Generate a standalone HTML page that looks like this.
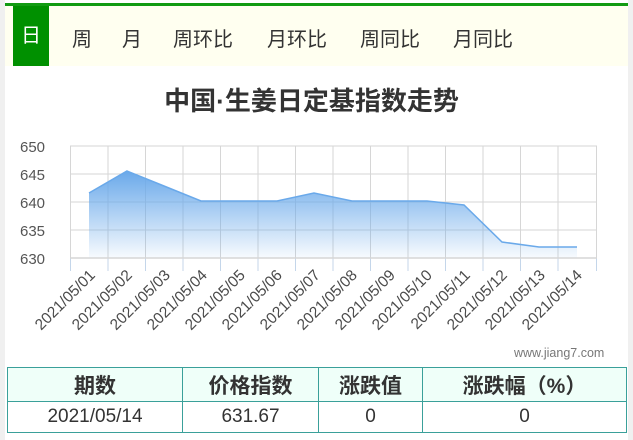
<!DOCTYPE html>
<html><head><meta charset="utf-8"><style>
*{margin:0;padding:0;box-sizing:border-box}
body{width:633px;height:440px;background:#fff;font-family:"Liberation Sans","Noto Sans CJK SC",sans-serif;position:relative;overflow:hidden}
.side{position:absolute;top:0;bottom:0;width:5px;background:#f0f0f0}
.top{position:absolute;left:5px;right:5px;top:3px;height:3px;background:#129b12}
.tabs{position:absolute;left:5px;right:5px;top:6px;height:60px;background:#fffff0}
.tab{position:absolute;top:17px;font-size:20px;color:#333}
.act{position:absolute;left:8px;top:0;width:36px;height:60px;background:#009000;color:#fff;font-size:20px;text-align:center;line-height:60px}
h1{position:absolute;left:0;width:623px;top:81px;text-align:center;font-size:26px;font-weight:bold;color:#333}
.wm{position:absolute;left:514px;top:346px;font-size:12.5px;color:#777}
table{position:absolute;left:7px;top:367px;width:620px;border-collapse:collapse;font-size:19px;color:#333}
td{border:1.5px solid #3aa09a;text-align:center}
tr.h td{background:#effff9;font-weight:bold;height:34px;font-size:21px}
tr.d td{height:31px}
</style></head><body>
<div class="side" style="left:0"></div><div class="side" style="right:0"></div>
<div class="top"></div>
<div class="tabs">
<div class="act">日</div>
<div class="tab" style="left:67px">周</div>
<div class="tab" style="left:117px">月</div>
<div class="tab" style="left:168px">周环比</div>
<div class="tab" style="left:262px">月环比</div>
<div class="tab" style="left:355px">周同比</div>
<div class="tab" style="left:448px">月同比</div>
</div>
<h1>中国·生姜日定基指数走势</h1>
<svg width="633" height="360" style="position:absolute;left:0;top:0">
<defs><linearGradient id="g" x1="0" y1="0" x2="0" y2="1"><stop offset="0" stop-color="#6aa9ea"/><stop offset="1" stop-color="#6aa9ea" stop-opacity="0.05"/></linearGradient></defs>
<g stroke="#d6d6d6" stroke-width="1">
<line x1="70" y1="146" x2="597" y2="146"/><line x1="70" y1="174" x2="597" y2="174"/><line x1="70" y1="202" x2="597" y2="202"/><line x1="70" y1="230" x2="597" y2="230"/>
<line x1="70.5" y1="146" x2="70.5" y2="258"/><line x1="108" y1="146" x2="108" y2="258"/><line x1="145.5" y1="146" x2="145.5" y2="258"/><line x1="183" y1="146" x2="183" y2="258"/><line x1="220.5" y1="146" x2="220.5" y2="258"/><line x1="258" y1="146" x2="258" y2="258"/><line x1="295.5" y1="146" x2="295.5" y2="258"/><line x1="333" y1="146" x2="333" y2="258"/><line x1="370.5" y1="146" x2="370.5" y2="258"/><line x1="408" y1="146" x2="408" y2="258"/><line x1="445.5" y1="146" x2="445.5" y2="258"/><line x1="483" y1="146" x2="483" y2="258"/><line x1="520.5" y1="146" x2="520.5" y2="258"/><line x1="558" y1="146" x2="558" y2="258"/><line x1="596.5" y1="146" x2="596.5" y2="258"/>
</g>
<g stroke="#c4d6ea" stroke-width="1">
<line x1="70.5" y1="258" x2="70.5" y2="271"/><line x1="108" y1="258" x2="108" y2="271"/><line x1="145.5" y1="258" x2="145.5" y2="271"/><line x1="183" y1="258" x2="183" y2="271"/><line x1="220.5" y1="258" x2="220.5" y2="271"/><line x1="258" y1="258" x2="258" y2="271"/><line x1="295.5" y1="258" x2="295.5" y2="271"/><line x1="333" y1="258" x2="333" y2="271"/><line x1="370.5" y1="258" x2="370.5" y2="271"/><line x1="408" y1="258" x2="408" y2="271"/><line x1="445.5" y1="258" x2="445.5" y2="271"/><line x1="483" y1="258" x2="483" y2="271"/><line x1="520.5" y1="258" x2="520.5" y2="271"/><line x1="558" y1="258" x2="558" y2="271"/><line x1="596.5" y1="258" x2="596.5" y2="271"/>
</g>
<path d="M89 258 L89 193 L127 171 L164 186 L201 201 L239 201 L277 201 L314 193 L352 201 L389 201 L427 201 L464 205 L502 242 L539 247 L577 247 L577 258 Z" fill="url(#g)"/>
<polyline points="89,193 127,171 164,186 201,201 239,201 277,201 314,193 352,201 389,201 427,201 464,205 502,242 539,247 577,247" fill="none" stroke="#6aa9ea" stroke-width="1.5"/>
<line x1="70" y1="258" x2="597" y2="258" stroke="#d6d6d6" stroke-width="1.5"/>
<g font-size="15" fill="#555" font-family="Liberation Sans,sans-serif">
<text x="20" y="152">650</text><text x="20" y="180">645</text><text x="20" y="208">640</text><text x="20" y="236">635</text><text x="20" y="264">630</text>
</g>
<g font-size="15.5" fill="#4a4a4a" font-family="Liberation Sans,sans-serif" text-anchor="end">
<text transform="translate(96,276) rotate(-45)">2021/05/01</text>
<text transform="translate(133,276) rotate(-45)">2021/05/02</text>
<text transform="translate(171,276) rotate(-45)">2021/05/03</text>
<text transform="translate(208,276) rotate(-45)">2021/05/04</text>
<text transform="translate(246,276) rotate(-45)">2021/05/05</text>
<text transform="translate(283,276) rotate(-45)">2021/05/06</text>
<text transform="translate(321,276) rotate(-45)">2021/05/07</text>
<text transform="translate(358,276) rotate(-45)">2021/05/08</text>
<text transform="translate(396,276) rotate(-45)">2021/05/09</text>
<text transform="translate(433,276) rotate(-45)">2021/05/10</text>
<text transform="translate(471,276) rotate(-45)">2021/05/11</text>
<text transform="translate(508,276) rotate(-45)">2021/05/12</text>
<text transform="translate(546,276) rotate(-45)">2021/05/13</text>
<text transform="translate(583,276) rotate(-45)">2021/05/14</text>
</g>
</svg>
<div class="wm">www.jiang7.com</div>
<table>
<tr class="h"><td style="width:175px">期数</td><td style="width:136px">价格指数</td><td style="width:104px">涨跌值</td><td>涨跌幅（%）</td></tr>
<tr class="d"><td>2021/05/14</td><td>631.67</td><td>0</td><td>0</td></tr>
</table>
</body></html>
